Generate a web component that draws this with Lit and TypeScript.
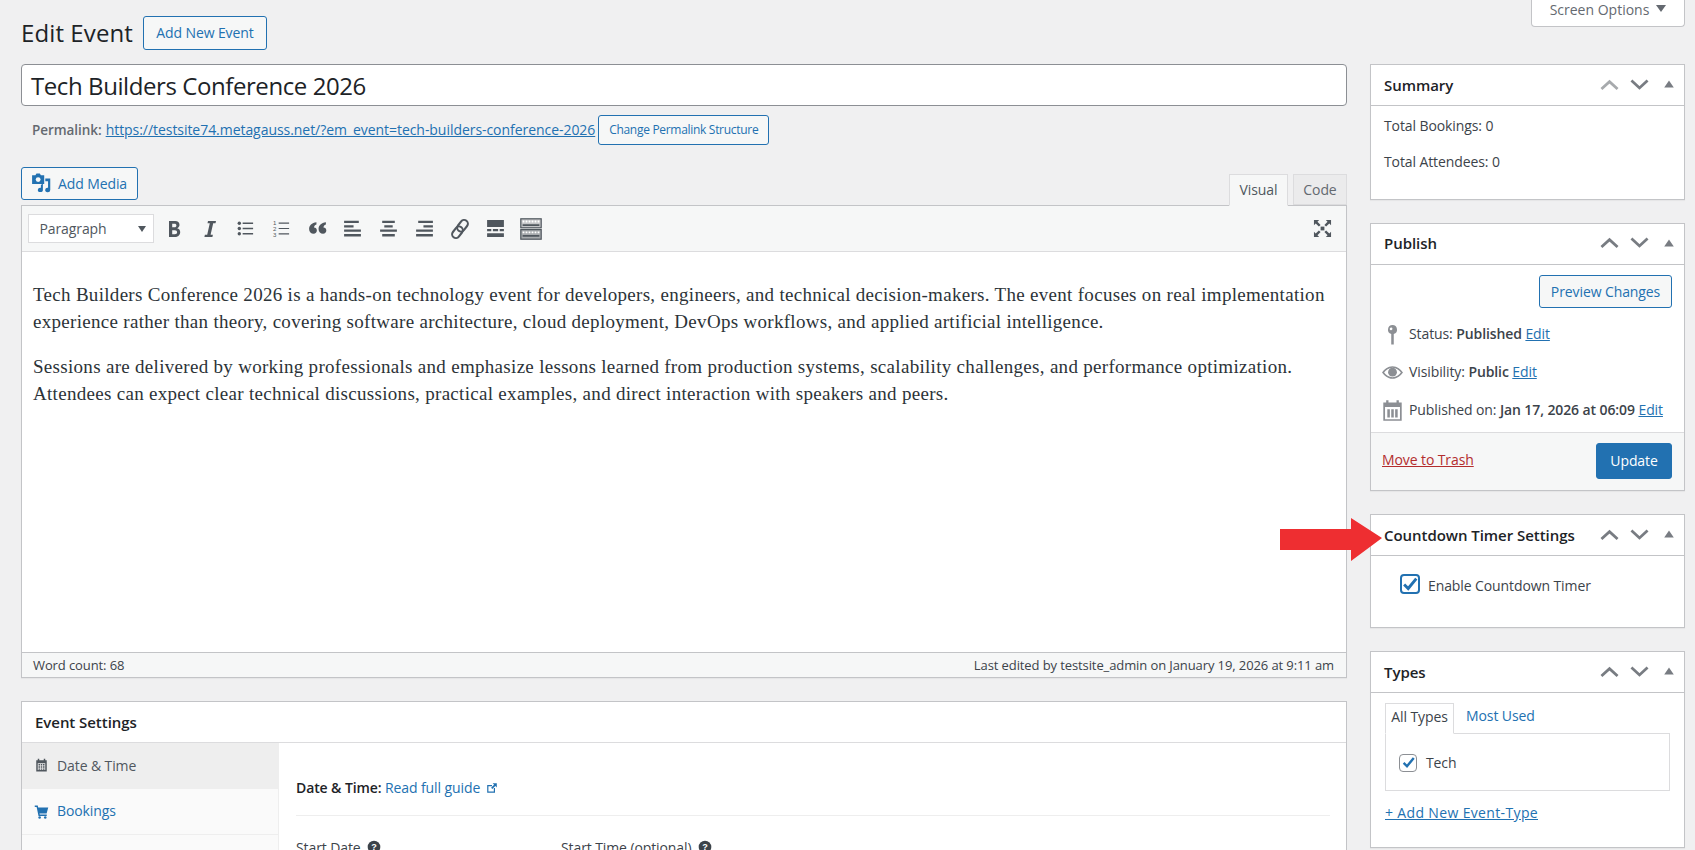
import { LitElement, html, css, svg } from "lit";
import { customElement } from "lit/decorators.js";

const ic = (w: number, h: number, body: unknown, vb = "0 0 20 20") =>
  html`<svg class="ic" width=${w} height=${h} viewBox=${vb} fill="currentColor" aria-hidden="true">${body}</svg>`;

const bold = svg`<path d="M5 2h6.200c2.700 0 4.300 1.500 4.300 3.800 0 1.600-.9 2.900-2.400 3.400 1.900.4 3.100 1.900 3.100 3.800 0 2.800-2 5-5 5H5V2zm3.200 6.300h2.300c1.200 0 1.900-.7 1.900-1.800s-.7-1.700-1.900-1.700H8.200v3.500zm0 7h2.700c1.400 0 2.200-.8 2.200-2s-.8-2.100-2.200-2.100H8.200v4.100z"/>`;
const italic = svg`<path d="M8 2h8l-.5 2.200h-2.300L10.600 15.800h2.300L12.400 18h-8l.5-2.200h2.300L9.800 4.200H7.500z"/>`;
const ul = svg`<circle cx="3.500" cy="4.500" r="1.800"/><circle cx="3.500" cy="10" r="1.800"/><circle cx="3.500" cy="15.500" r="1.800"/><path d="M7 3.800h11v1.400H7zM7 9.300h11v1.400H7zM7 14.800h11v1.400H7z"/>`;
const ol = svg`<path d="M7 3.800h11v1.200H7zM7 9.400h11v1.200H7zM7 15h11v1.200H7z"/><text x="1" y="6.600" font-size="6.400" font-family="Liberation Sans">1</text><text x="1" y="12.600" font-size="6.400" font-family="Liberation Sans">2</text><text x="1" y="18.600" font-size="6.400" font-family="Liberation Sans">3</text>`;
const quote = svg`<path d="M9 4v2.200C7.300 6.800 6.700 7.900 6.700 9.100c1.600 0 2.700 1.100 2.700 2.800 0 1.800-1.300 3.100-3.100 3.100C3.900 15 2 13.100 2 10.400 2 7.300 4.600 4.500 9 4zM18 4v2.200c-1.700.6-2.300 1.700-2.300 2.900 1.600 0 2.700 1.100 2.700 2.800 0 1.800-1.300 3.100-3.100 3.100-2.400 0-4.300-1.900-4.300-4.600C11 7.300 13.600 4.500 18 4z"/>`;
const alignL = svg`<path d="M2 2.500h14v2.200H2zM2 6.800h9V9H2zM2 11h16v2.200H2zM2 15.300h16v2.200H2z"/>`;
const alignC = svg`<path d="M4 2.500h12v2.200H4zM6 6.800h8V9H6zM2 11h16v2.200H2zM4 15.300h12v2.200H4z"/>`;
const alignR = svg`<path d="M4 2.500h14v2.200H4zM9 6.800h9V9H9zM2 11h16v2.200H2zM2 15.300h16v2.200H2z"/>`;
const link = svg`<g fill="none" stroke="currentColor" stroke-width="1.900" transform="rotate(-52 10 10)"><rect x="0.500" y="6.600" width="11.500" height="6.800" rx="3.400"/><rect x="8" y="6.600" width="11.500" height="6.800" rx="3.400"/></g>`;
const more = svg`<path d="M2 2h16v6.500H2zM2 10.500h4v2H2zM7.500 10.500h5v2h-5zM14 10.500h4v2h-4zM2 14.500h16v3.500H2z"/>`;
const kitchen = svg`<rect x="1.500" y="1.500" width="17" height="7.500" fill="#c3c4c7" stroke="currentColor"/><rect x="1.500" y="10.500" width="17" height="8" fill="#a7aaad" stroke="currentColor"/><path fill="#fff" d="M3 3h1.500v1.500H3zM5.500 3H7v1.500H5.500zM8 3h1.500v1.500H8zM10.500 3H12v1.500h-1.500zM13 3h1.500v1.500H13zM15.500 3H17v1.500h-1.500zM3 12h1.500v1.500H3zM5.500 12H7v1.500H5.500zM8 12h1.500v1.500H8zM10.500 12H12v1.500h-1.500zM13 12h1.500v1.500H13zM15.500 12H17v1.500h-1.500z"/><path d="M3 6h14v1.500H3zM3 15h14v1.500H3z"/>`;
const fullscreen = svg`<path d="M8 8h4v4H8z"/><path d="M1 1h5.500L4.700 2.800 8 6.200 6.200 8 2.800 4.700 1 6.500zM19 1v5.500l-1.800-1.800L13.800 8 12 6.200l3.300-3.400L13.500 1zM1 19v-5.500l1.800 1.800L6.200 12 8 13.800l-3.300 3.400L6.500 19zM19 19h-5.500l1.800-1.800L12 13.800l1.800-1.800 3.400 3.300 1.800-1.800z"/>`;
const media = svg`<path d="M1 2h3l1-1.500h3L9 2h3v8H1z"/><circle cx="6.500" cy="6" r="2.200" fill="#f6f7f7"/><path d="M13 5h4.500v10.500a2.300 2 0 1 1-2-2V7.500H13zM10.800 9.500v5.700a2.300 2 0 1 1-1.800-1.800V11z"/>`;
const pin = svg`<path fill-rule="evenodd" d="M10 1a4.400 4.400 0 0 1 1.200 8.600V19.500H8.800V9.600A4.400 4.400 0 0 1 10 1zM8.600 3.300a1.300 1.300 0 1 0 .1 2.600 1.300 1.300 0 0 0-.1-2.600z"/>`;
const eye = svg`<path fill-rule="evenodd" d="M10 4c4.500 0 8 3.300 10 6-2 2.700-5.500 6-10 6s-8-3.300-10-6c2-2.700 5.500-6 10-6zm0 1.500c-3.400 0-6.300 2.300-8 4.500 1.700 2.200 4.600 4.500 8 4.500s6.300-2.300 8-4.500c-1.700-2.200-4.600-4.500-8-4.500z"/><circle cx="10" cy="9.700" r="4.200"/>`;
const cal = svg`<path fill-rule="evenodd" d="M2 3h2.500V1h2v2h7V1h2v2H18v16H2zM3.500 7v10.500h13V7z"/><path d="M5.500 9h2.200v7H5.500zM8.900 9h2.200v7H8.900zM12.300 9h2.200v7h-2.200z"/>`;
const smallCal = svg`<path fill-rule="evenodd" d="M3 3h2V1h2v2h6V1h2v2h2v15H3zM5 7v9h10V7z"/><path d="M6 8h2v2H6zM9 8h2v2H9zM12 8h2v2h-2zM6 11h2v2H6zM9 11h2v2H9zM12 11h2v2h-2zM6 14h2v1.500H6zM9 14h2v1.500H9zM12 14h2v1.500h-2z"/>`;
const cart = svg`<path d="M1 2h4l.6 2.500H19l-2.200 8H7.300l.4 1.500H17v2H6L3.500 4H1z"/><circle cx="7.500" cy="18" r="1.700"/><circle cx="15" cy="18" r="1.700"/>`;
const ext = svg`<path d="M2 5h8v2H4v9h9v-6h2v8H2z"/><path d="M11 2h7v7l-2.500-2.500-5 5-2-2 5-5z"/>`;
const up = svg`<path fill="none" stroke="currentColor" stroke-width="2.400" d="M3 14l7-6.500 7 6.500"/>`;
const down = svg`<path fill="none" stroke="currentColor" stroke-width="2.400" d="M3 6.500l7 6.500 7-6.500"/>`;
const tri = svg`<path d="M2 16L10 4l8 12z"/>`;
const check = svg`<path fill="none" stroke="#2271b1" stroke-width="3.200" d="M3.500 10.500l4.500 4.500L17 4"/>`;
const help = svg`<circle cx="10" cy="10" r="9"/><text x="10" y="14.500" fill="#fff" text-anchor="middle" font-size="13" font-weight="700" font-family="Liberation Sans">?</text>`;

@customElement("app-root")
export class AppRoot extends LitElement {
  static styles = css`
    :host {
      display: block;
      position: relative;
      height: 850px;
      overflow: hidden;
      background: #f0f0f1;
      color: #3c434a;
      font: 14px/1.4 "Open Sans", "Noto Sans", sans-serif;
      letter-spacing: -0.1px;
    }
    a { color: #2271b1; }
    .ic { display: block; flex: none; }
    .page {
      display: grid;
      grid-template-columns: 1326px 315px;
      gap: 23px;
      padding: 0 10px 0 21px;
    }
    .heading { display: flex; align-items: center; height: 64px; box-sizing: border-box; gap: 10px; }
    h1 { margin: 0; font-size: 24px; font-weight: 400; color: #1d2327; letter-spacing: 0.1px; position: relative; top: 1px; }
    .btn {
      display: inline-flex; align-items: center; gap: 6px;
      box-sizing: border-box;
      border: 1px solid #2271b1; border-radius: 3px;
      background: #f6f7f7; color: #2271b1;
      height: 33px; padding: 0 12px;
    }
    .add-new { position: relative; top: 1px; height: 34px; width: 124px; justify-content: center; padding: 0; }
    .title {
      box-sizing: border-box; height: 42px;
      border: 1px solid #8c8f94; border-radius: 4px; background: #fff;
      color: #1d2327; font-size: 24px; letter-spacing: -0.42px;
      padding: 2px 0 0 9px; display: flex; align-items: center;
    }
    .perma { display: flex; align-items: center; height: 30px; margin: 9px 0 0 11px; color: #646970; letter-spacing: -0.05px; gap: 3px; white-space: nowrap; }
    .perma b { font-weight: 600; margin-right: 1px; font-size: 13.500px; letter-spacing: -0.05px; }
    .btn-sm { height: 30px; width: 171px; padding: 0; justify-content: center; font-size: 12px; letter-spacing: -0.3px; }
    .media-row { display: flex; justify-content: space-between; align-items: flex-end; margin-top: 21px; height: 39px; }
    .media-btn { height: 33px; width: 117px; padding: 0 0 0 9px; margin-bottom: 5px; gap: 5px; }
    .tabs { display: flex; gap: 5px; align-items: flex-start; height: 32px; margin-bottom: -1px; position: relative; z-index: 1; }
    .tab {
      box-sizing: border-box; height: 32px; border: 1px solid #dcdcde; background: #ebebec;
      color: #646970; display: flex; align-items: center; justify-content: center;
    }
    .tab.v { width: 59px; background: #f6f7f7; border-bottom-color: #f6f7f7; color: #50575e; }
    .tab.c { width: 54px; height: 31px; }
    .editor { border: 1px solid #c3c4c7; background: #fff; box-sizing: border-box; height: 473px; display: flex; flex-direction: column; box-shadow: 0 1px 1px rgba(0,0,0,.04); }
    .toolbar { height: 46px; box-sizing: border-box; background: #f6f7f7; border-bottom: 1px solid #dcdcde; display: flex; align-items: center; padding: 0 14px 0 5.500px; color: #50575e; }
    .format {
      box-sizing: border-box; width: 126px; height: 29px; background: #fff; border: 1px solid #dcdcde;
      display: flex; align-items: center; justify-content: space-between; padding: 0 7px 0 11px; margin-right: 3px; color: #50575e;
    }
    .caret { width: 0; height: 0; border-left: 4px solid transparent; border-right: 4px solid transparent; border-top: 6px solid #50575e; }
    .tb { display: flex; align-items: center; justify-content: center; width: 35.700px; flex: none; }
    .spacer { flex: 1; }
    .content { flex: 1; padding: 29px 10px 0 11px; font: 19px/27px "Liberation Serif", serif; color: #2c3338; letter-spacing: 0.3px; }
    .content p { margin: 0 0 18px; }
    .status { height: 25px; box-sizing: border-box; border-top: 1px solid #c3c4c7; background: #f6f7f7; display: flex; align-items: center; justify-content: space-between; padding: 0 12px 0 11px; font-size: 13px; color: #3c434a; }
    .settings { border: 1px solid #c3c4c7; background: #fff; margin-top: 23px; height: 300px; box-sizing: border-box; }
    .s-head { height: 41px; box-sizing: border-box; border-bottom: 1px solid #dcdcde; display: flex; align-items: center; padding: 1px 0 0 13px; font-weight: 600; color: #1d2327; font-size: 15px; letter-spacing: -0.05px; }
    .s-body { display: grid; grid-template-columns: 257px 1fr; height: 258px; }
    .s-nav { background: #fafafa; border-right: 1px solid #eeeeee; }
    .s-item { display: flex; align-items: center; gap: 8px; height: 46px; box-sizing: border-box; padding: 0 0 1px 12px; color: #2271b1; border-bottom: 1px solid #eeeeee; }
    .s-item.on { background: #eeeeee; color: #50575e; border: 0; }
    .s-main { padding: 35px 16px 0 17px; }
    .s-title { display: flex; align-items: center; gap: 6px; color: #1d2327; }
    .s-title b { font-weight: 600; }
    .s-title a { text-decoration: none; }
    .s-title .e { color: #2271b1; }
    .s-main hr { border: 0; border-top: 1px solid #eeeeee; margin: 17px 0 22px; }
    .s-fields { display: flex; }
    .s-field { width: 265px; display: flex; align-items: center; gap: 6px; color: #3c434a; }
    .side { display: flex; flex-direction: column; gap: 23px; padding-top: 64px; }
    .screen {
      position: absolute; top: 0; right: 10px; width: 154px; height: 27px; box-sizing: border-box;
      background: #fff; border: 1px solid #c3c4c7; border-top: 0; border-radius: 0 0 4px 4px;
      display: flex; align-items: center; justify-content: center; gap: 7px; color: #646970; padding-bottom: 6px; letter-spacing: 0;
    }
    .screen .caret { border-top: 7px solid #646970; border-left-width: 5px; border-right-width: 5px; position: relative; top: -2px; }
    .box { background: #fff; border: 1px solid #c3c4c7; box-sizing: border-box; box-shadow: 0 1px 1px rgba(0,0,0,.04); }
    .b-head { height: 41px; flex: none; box-sizing: border-box; border-bottom: 1px solid #c3c4c7; display: flex; align-items: center; justify-content: space-between; padding: 0 0 0 13px; font-weight: 600; color: #1d2327; font-size: 15px; letter-spacing: -0.05px; }
    .publish .b-head { padding-bottom: 1px; }
    .ctrls { display: flex; align-items: center; color: #787c82; margin-top: -2px; }
    .ctrls span { width: 29.700px; display: flex; justify-content: center; }
    .ctrls .dim { color: #a7aaad; }
    .summary { height: 136px; }
    .summary .b-body { padding: 10px 13px; }
    .summary p { margin: 0 0 16px; line-height: 20px; }
    .publish { height: 268px; display: flex; flex-direction: column; }
    .pub-body { height: 168px; flex: none; box-sizing: border-box; padding: 10px 12px 0; border-bottom: 1px solid #dcdcde; }
    .pv { display: flex; justify-content: flex-end; margin-bottom: 7px; }
    .pv .btn { width: 133px; justify-content: center; padding: 0; }
    .row { display: flex; align-items: center; height: 38px; white-space: nowrap; gap: 7px; margin-left: -1px; }
    .row .iw { width: 20px; display: flex; justify-content: center; color: #8c8f94; }
    .row b { font-weight: 600; }
    .pub-foot { flex: 1; display: flex; align-items: center; justify-content: space-between; background: #f6f7f7; padding: 0 12px 2px 11px; }
    .trash { color: #b32d2e; margin-bottom: 2px; }
    .update { background: #2271b1; color: #fff; height: 36px; width: 76px; justify-content: center; padding: 0; }
    .countdown { height: 114px; }
    .cd-body { display: flex; align-items: flex-start; padding: 18px 0 0 29px; gap: 8px; }
    .cd-body .lb { padding-top: 2px; }
    .cb-big { width: 20px; height: 20px; border: 2px solid #2271b1; border-radius: 4px; box-sizing: border-box; display: flex; align-items: center; justify-content: center; }
    .types { height: 197px; }
    .t-body { padding: 10px 14px; }
    .t-tabs { display: flex; align-items: flex-start; height: 30px; position: relative; z-index: 1; }
    .t-tab { box-sizing: border-box; height: 31px; width: 69px; border: 1px solid #dcdcde; border-bottom-color: #fff; padding-bottom: 3px; display: flex; align-items: center; justify-content: center; color: #3c434a; background: #fff; }
    .t-tabs a { margin-left: 12px; padding-top: 3px; text-decoration: none; }
    .t-panel { box-sizing: border-box; height: 58px; width: 285px; border: 1px solid #dcdcde; display: flex; align-items: center; gap: 9px; padding: 1px 0 0 13px; }
    .cb { width: 18px; height: 18px; border: 1px solid #8c8f94; border-radius: 4px; box-sizing: border-box; display: flex; align-items: center; justify-content: center; }
    .add-type { display: block; margin-top: 12px; letter-spacing: 0.35px; }
    .arrow { position: absolute; left: 1280px; top: 518px; }
  `;

  private ctrls(dim = false) {
    return html`<div class="ctrls">
      <span class=${dim ? "dim" : ""}>${ic(23, 23, up)}</span>
      <span>${ic(23, 23, down)}</span>
      <span>${ic(12, 12, tri)}</span>
    </div>`;
  }

  render() {
    const tools = [
      [bold, 20], [italic, 20], [ul, 19], [ol, 19], [quote, 21], [alignL, 21], [alignC, 21], [alignR, 21], [link, 22], [more, 21], [kitchen, 24],
    ] as [unknown, number][];
    return html`
      <div class="page">
        <main>
          <div class="heading">
            <h1>Edit Event</h1>
            <span class="btn add-new">Add New Event</span>
          </div>
          <div class="title">Tech Builders Conference 2026</div>
          <div class="perma">
            <b>Permalink:</b>
            <a href="#">https://testsite74.metagauss.net/?em_event=tech-builders-conference-2026</a>
            <span class="btn btn-sm">Change Permalink Structure</span>
          </div>
          <div class="media-row">
            <span class="btn media-btn">${ic(22, 22, media)}Add Media</span>
            <div class="tabs"><span class="tab v">Visual</span><span class="tab c">Code</span></div>
          </div>
          <div class="editor">
            <div class="toolbar">
              <div class="format">Paragraph<span class="caret"></span></div>
              ${tools.map(([b, s]) => html`<span class="tb">${ic(s, s, b)}</span>`)}
              <span class="spacer"></span>
              ${ic(19, 19, fullscreen)}
            </div>
            <div class="content">
              <p>Tech Builders Conference 2026 is a hands-on technology event for developers, engineers, and technical decision-makers. The event focuses on real implementation experience rather than theory, covering software architecture, cloud deployment, DevOps workflows, and applied artificial intelligence.</p>
              <p>Sessions are delivered by working professionals and emphasize lessons learned from production systems, scalability challenges, and performance optimization. Attendees can expect clear technical discussions, practical examples, and direct interaction with speakers and peers.</p>
            </div>
            <div class="status"><span>Word count: 68</span><span>Last edited by testsite_admin on January 19, 2026 at 9:11 am</span></div>
          </div>
          <section class="settings">
            <div class="s-head">Event Settings</div>
            <div class="s-body">
              <nav class="s-nav">
                <div class="s-item on">${ic(15, 15, smallCal)}Date &amp; Time</div>
                <div class="s-item">${ic(15, 15, cart)}Bookings</div>
              </nav>
              <div class="s-main">
                <div class="s-title"><span><b>Date &amp; Time:</b> <a href="#">Read full guide</a></span><span class="e">${ic(12, 12, ext)}</span></div>
                <hr />
                <div class="s-fields">
                  <div class="s-field">Start Date ${ic(14, 14, help)}</div>
                  <div class="s-field">Start Time (optional) ${ic(14, 14, help)}</div>
                </div>
              </div>
            </div>
          </section>
        </main>
        <aside class="side">
          <section class="box summary">
            <div class="b-head">Summary${this.ctrls(true)}</div>
            <div class="b-body"><p>Total Bookings: 0</p><p>Total Attendees: 0</p></div>
          </section>
          <section class="box publish">
            <div class="b-head">Publish${this.ctrls()}</div>
            <div class="pub-body">
              <div class="pv"><span class="btn">Preview Changes</span></div>
              <div class="row"><span class="iw">${ic(21, 21, pin)}</span><span>Status: <b>Published</b> <a href="#">Edit</a></span></div>
              <div class="row"><span class="iw">${ic(21, 21, eye)}</span><span>Visibility: <b>Public</b> <a href="#">Edit</a></span></div>
              <div class="row"><span class="iw">${ic(23, 23, cal)}</span><span>Published on: <b>Jan 17, 2026 at 06:09</b> <a href="#">Edit</a></span></div>
            </div>
            <div class="pub-foot"><a class="trash" href="#">Move to Trash</a><span class="btn update">Update</span></div>
          </section>
          <section class="box countdown">
            <div class="b-head">Countdown Timer Settings${this.ctrls()}</div>
            <div class="cd-body"><span class="cb-big">${ic(18, 18, check)}</span><span class="lb">Enable Countdown Timer</span></div>
          </section>
          <section class="box types">
            <div class="b-head">Types${this.ctrls()}</div>
            <div class="t-body">
              <div class="t-tabs"><span class="t-tab">All Types</span><a href="#">Most Used</a></div>
              <div class="t-panel"><span class="cb">${ic(15, 15, check)}</span>Tech</div>
              <a class="add-type" href="#">+ Add New Event-Type</a>
            </div>
          </section>
        </aside>
      </div>
      <div class="screen">Screen Options<span class="caret"></span></div>
      <svg class="arrow" width="102" height="43" viewBox="0 0 102 43" aria-hidden="true"><path fill="#ee2e31" d="M0 11h71V0l31 20-31 23V32H0z"/></svg>
    `;
  }
}
